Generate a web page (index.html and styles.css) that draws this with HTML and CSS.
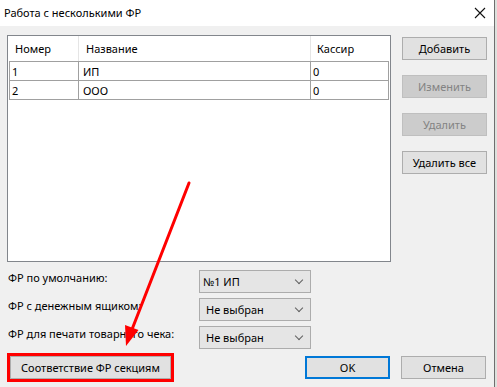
FILE: index.html
```html
<!DOCTYPE html>
<html lang="ru">
<head>
  <meta charset="UTF-8" />
  <title>Работа с несколькими ФР</title>
  <link rel="stylesheet" href="styles.css">
</head>
<body>

<div class="window">
  <div class="titlebar">
    <span class="title">Работа с несколькими ФР</span>
    <svg class="close" width="12" height="12" viewBox="0 0 12 12">
      <path d="M1 1 L11 11 M11 1 L1 11" stroke="#111" stroke-width="1.1" fill="none"/>
    </svg>
  </div>

  <div class="content">
    <div class="top">
      <div class="listbox">
        <div class="grid-head">
          <div class="col c1">Номер</div>
          <div class="col c2">Название</div>
          <div class="col c3">Кассир</div>
        </div>
        <div class="grid-rows">
          <div class="grid-row">
            <div class="cell c1">1</div>
            <div class="cell c2">ИП</div>
            <div class="cell c3">0</div>
          </div>
          <div class="grid-row">
            <div class="cell c1">2</div>
            <div class="cell c2">ООО</div>
            <div class="cell c3">0</div>
          </div>
        </div>
      </div>

      <div class="side-buttons">
        <button class="btn">Добавить</button>
        <button class="btn" disabled>Изменить</button>
        <button class="btn" disabled>Удалить</button>
        <button class="btn">Удалить все</button>
      </div>
    </div>

    <div class="settings">
      <div class="label">ФР по умолчанию:</div>
      <div class="combo combo-first"><span>№1 ИП</span><i class="chev"></i></div>
      <div class="label">ФР с денежным ящиком:</div>
      <div class="combo"><span>Не выбран</span><i class="chev"></i></div>
      <div class="label">ФР для печати товарного чека:</div>
      <div class="combo"><span>Не выбран</span><i class="chev"></i></div>
    </div>

    <div class="footer">
      <div class="highlight">
        <button class="btn btn-wide">Соответствие ФР секциям</button>
      </div>
      <button class="btn btn-default">OK</button>
      <button class="btn">Отмена</button>
    </div>
  </div>

  <!-- annotation arrow -->
  <svg class="arrow" width="494" height="387" viewBox="0 0 494 387">
    <line x1="189" y1="183" x2="131" y2="332" stroke="#ff0000" stroke-width="3" stroke-linecap="round"/>
    <polygon points="126,346 138.5,330 125,325" fill="#ff0000"/>
  </svg>
</div>

</body>
</html>
```

FILE: styles.css
```css
* {
  margin: 0;
  padding: 0;
  box-sizing: border-box;
}
body {
  background: #dde1dd;
  font-family: 'Noto Sans', sans-serif;
  font-size: 11px;
  color: #000;
}
.window {
  position: relative;
  width: 495px;
  height: 387px;
  background: #f0f0f0;
  border-right: 1px solid #6e6e6e;
  overflow: hidden;
}
.titlebar {
  height: 26px;
  background: #ffffff;
  display: flex;
  align-items: center;
  justify-content: space-between;
  padding: 0 8px 0 4px;
}
.title {
  font-size: 11px;
  line-height: 14px;
}
.content {
  padding: 9px 0 0 7px;
}
.top {
  display: flex;
  align-items: flex-start;
}
.listbox {
  width: 384px;
  height: 227px;
  background: #ffffff;
  border: 1px solid #82868c;
}
.grid-head {
  display: flex;
  height: 25px;
  align-items: center;
}
.grid-head .col {
  height: 100%;
  display: flex;
  align-items: center;
  border-right: 1px solid #e5e5e5;
}
.grid-head .c1 { width: 71px; padding-left: 7px; }
.grid-head .c2 { width: 232px; padding-left: 7px; }
.grid-head .c3 { width: 79px; padding-left: 6px; border-right: none; }
.grid-rows {
  margin: 0 1px 0 1px;
  border-top: 1px solid #a0a0a0;
}
.grid-row {
  display: flex;
  height: 19px;
  border-bottom: 1px solid #a0a0a0;
}
.cell {
  display: flex;
  align-items: center;
  border-left: 1px solid #a0a0a0;
  padding-left: 2px;
}
.cell.c1 { width: 69px; }
.cell.c2 { width: 232px; padding-left: 4px; }
.cell.c3 { width: 79px; border-right: 1px solid #a0a0a0; }
.side-buttons {
  display: flex;
  flex-direction: column;
  gap: 15px;
  margin: 2px 0 0 11px;
}
.btn {
  width: 85px;
  height: 23px;
  background: #e1e1e1;
  border: 1px solid #adadad;
  font-family: 'Noto Sans', sans-serif;
  font-size: 11px;
  color: #000;
}
.btn:disabled {
  background: #cccccc;
  border-color: #bfbfbf;
  color: #838383;
}
.settings {
  display: grid;
  grid-template-columns: 192px 112px;
  row-gap: 5px;
  margin-top: 8px;
}
.label {
  padding-left: 1px;
  height: 23px;
  line-height: 15px;
}
.combo {
  height: 23px;
  background: #e5e5e5;
  border: 1px solid #acacac;
  display: flex;
  align-items: center;
  justify-content: space-between;
  padding: 0 8px 0 6px;
}
.combo-first {
  padding-left: 3px;
}
.chev {
  width: 6px;
  height: 6px;
  border-right: 1px solid #606060;
  border-bottom: 1px solid #606060;
  transform: rotate(45deg);
  margin-top: -4px;
}
.footer {
  display: flex;
  align-items: center;
  margin-top: 4px;
}
.highlight {
  border: 3px solid #ff0000;
  width: 167px;
  height: 29px;
}
.btn-wide {
  width: 161px;
}
.btn-default {
  margin-left: 131px;
  border: 2px solid #0078d7;
}
.footer .btn + .btn {
  margin-left: 12px;
}
.footer .btn-default + .btn {
  margin-left: 11px;
}
.arrow {
  position: absolute;
  top: 0;
  left: 0;
  pointer-events: none;
}
```
